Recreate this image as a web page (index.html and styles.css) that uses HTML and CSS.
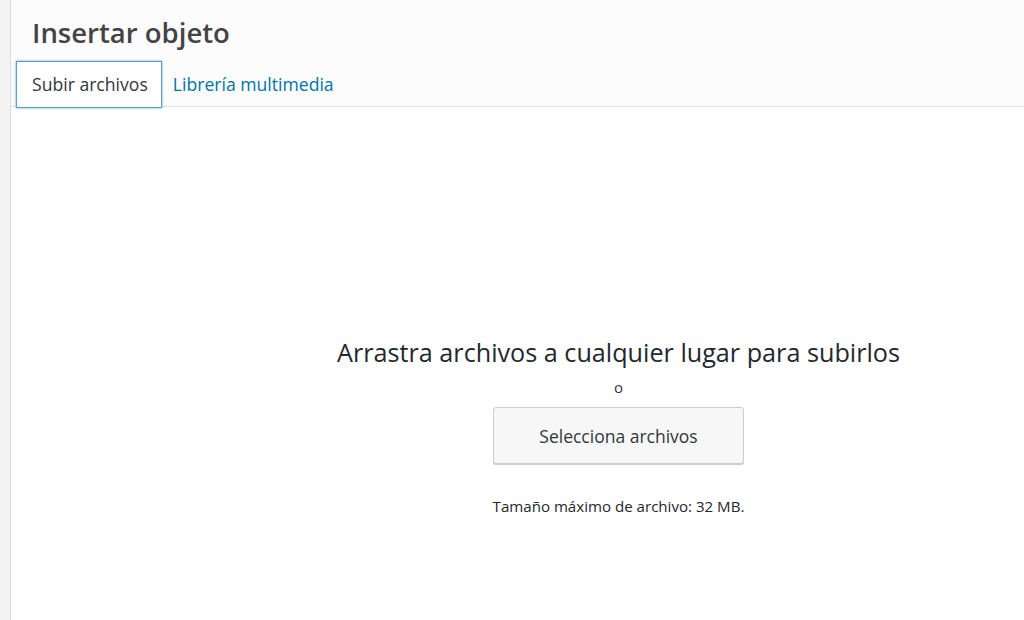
FILE: index.html
```html
<!DOCTYPE html>
<html lang="es">
<head>
<meta charset="utf-8">
<title>Insertar objeto</title>
<link rel="stylesheet" href="styles.css">
</head>
<body>
<div class="frame">
  <div class="menu"></div>
  <div class="main">
    <div class="header">
      <h1 class="title">Insertar objeto</h1>
      <div class="router">
        <a class="tab active">Subir archivos</a>
        <a class="tab">Librería multimedia</a>
      </div>
    </div>
    <div class="content">
      <div class="uploader">
        <p class="drop-text">Arrastra archivos a cualquier lugar para subirlos</p>
        <p class="or">o</p>
        <button class="select-btn" type="button">Selecciona archivos</button>
        <p class="max-size">Tamaño máximo de archivo: 32 MB.</p>
      </div>
    </div>
  </div>
</div>
</body>
</html>
```
FILE: styles.css
```css
html, body {
  margin: 0;
  padding: 0;
  background: #fff;
  overflow: hidden;
}
body {
  font-family: "Open Sans", "Noto Sans", sans-serif;
  color: #32373c;
}
.frame {
  display: flex;
  width: 1226px;
  height: 620px;
}
.menu {
  width: 10px;
  flex: none;
  background: #f3f3f3;
  border-right: 1px solid #ddd;
}
.main {
  flex: 1;
  display: flex;
  flex-direction: column;
}
.header {
  background: #fcfcfc;
  border-bottom: 1px solid #ddd;
  height: 107px;
  box-sizing: border-box;
}
.title {
  margin: 0;
  padding: 15px 21px 0;
  height: 61px;
  box-sizing: border-box;
  font-size: 27.5px;
  font-weight: 600;
  line-height: 36px;
  color: #444;
}
.router {
  display: flex;
  height: 45px;
  padding-left: 5px;
}
.tab {
  display: block;
  padding: 0 10px;
  height: 47px;
  flex: none;
  box-sizing: border-box;
  line-height: 45px;
  font-size: 17.6px;
  color: #0073aa;
  text-decoration: none;
  border: 1px solid transparent;
}
.tab.active {
  padding: 0 13px 0 15px;
  color: #32373c;
  background: #fff;
  border-color: #5b9dd9;
  box-shadow: 0 0 2px rgba(30, 140, 190, 0.8);
  position: relative;
  z-index: 1;
}
.content {
  flex: 1;
  background: #fff;
}
.uploader {
  display: flex;
  flex-direction: column;
  align-items: center;
  padding-top: 229px;
}
.drop-text {
  margin: 0;
  font-size: 25.2px;
  line-height: 32px;
  color: #23282d;
}
.or {
  margin: 9px 0 0;
  font-size: 15px;
  line-height: 20px;
}
.select-btn {
  margin-top: 10px;
  width: 251px;
  height: 57px;
  font-family: inherit;
  font-size: 17.5px;
  color: #32373c;
  background: #f7f7f7;
  border: 1px solid #ccc;
  border-radius: 3px;
  box-shadow: 0 1px 0 #ccc;
}
.max-size {
  margin: 32px 0 0;
  font-size: 15.1px;
  line-height: 20px;
  color: #23282d;
}
```
